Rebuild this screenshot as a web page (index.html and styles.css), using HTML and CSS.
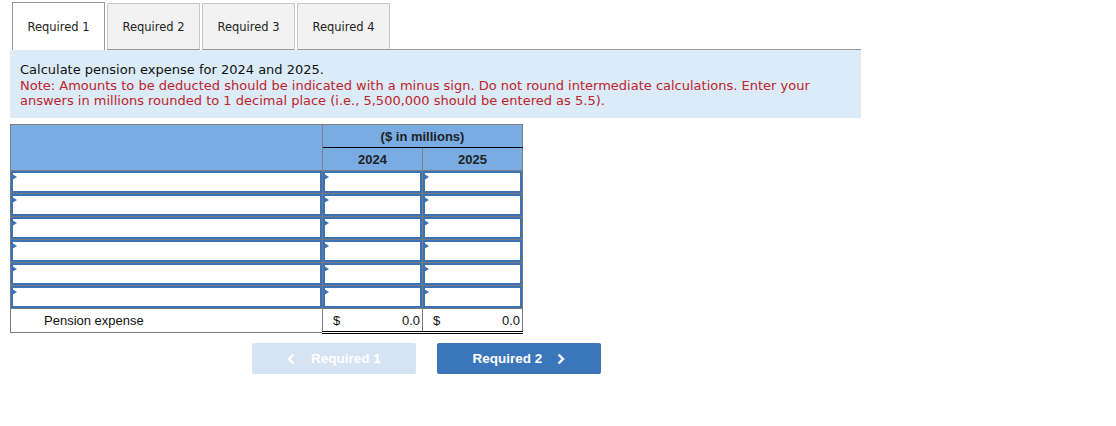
FILE: index.html
```html
<!DOCTYPE html>
<html>
<head>
<meta charset="utf-8">
<link rel="stylesheet" href="styles.css">
</head>
<body>
<div class="page">
  <div class="tabs">
    <div class="tab active">Required 1</div>
    <div class="tab">Required 2</div>
    <div class="tab">Required 3</div>
    <div class="tab">Required 4</div>
    <div class="tab-fill"></div>
  </div>
  <div class="info">
    <div class="q">Calculate pension expense for 2024 and 2025.</div>
    <div class="note">Note: Amounts to be deducted should be indicated with a minus sign. Do not round intermediate calculations. Enter your answers in millions rounded to 1 decimal place (i.e., 5,500,000 should be entered as 5.5).</div>
  </div>
  <table class="grid">
    <colgroup><col class="c1"><col class="c2"><col class="c3"></colgroup>
    <thead>
      <tr><th class="blank" rowspan="2"></th><th class="units" colspan="2">($ in millions)</th></tr>
      <tr><th class="yr">2024</th><th class="yr">2025</th></tr>
    </thead>
    <tbody>
      <tr class="entry"><td><div class="inp"></div></td><td><div class="inp"></div></td><td><div class="inp"></div></td></tr>
      <tr class="entry"><td><div class="inp"></div></td><td><div class="inp"></div></td><td><div class="inp"></div></td></tr>
      <tr class="entry"><td><div class="inp"></div></td><td><div class="inp"></div></td><td><div class="inp"></div></td></tr>
      <tr class="entry"><td><div class="inp"></div></td><td><div class="inp"></div></td><td><div class="inp"></div></td></tr>
      <tr class="entry"><td><div class="inp"></div></td><td><div class="inp"></div></td><td><div class="inp"></div></td></tr>
      <tr class="entry"><td><div class="inp"></div></td><td><div class="inp"></div></td><td><div class="inp"></div></td></tr>
      <tr class="total">
        <td class="label">Pension expense</td>
        <td class="num"><span class="cur">$</span><span class="val">0.0</span></td>
        <td class="num"><span class="cur">$</span><span class="val">0.0</span></td>
      </tr>
    </tbody>
  </table>
  <div class="nav">
    <button class="btn prev"><svg class="chev" width="8" height="12" viewBox="0 0 8 12"><path d="M6.5 1.5 L2 6 L6.5 10.5" fill="none" stroke="#fff" stroke-width="2.4"/></svg>Required 1</button>
    <button class="btn next">Required 2<svg class="chev" width="8" height="12" viewBox="0 0 8 12"><path d="M1.5 1.5 L6 6 L1.5 10.5" fill="none" stroke="#fff" stroke-width="2.4"/></svg></button>
  </div>
</div>
</body>
</html>
```

FILE: styles.css
```css
* { box-sizing: border-box; }
body { margin: 0; background: #fff; font-family: "DejaVu Sans", Verdana, sans-serif; }
.page { padding: 2px 0 0 10px; width: 861px; }

.tabs { display: flex; align-items: flex-end; height: 48px; gap: 2px; padding-left: 2px; }
.tab {
  width: 93px; height: 47px; display: flex; align-items: center; justify-content: center;
  font-size: 11.5px; color: #222; background: #f2f2f2; border: 1px solid #c8c8c8;
  border-bottom: 1px solid #999;
}
.tab.active { background: #fff; border-color: #999; border-bottom: none; height: 48px; }
.tab-fill { flex: 1; border-bottom: 1px solid #999; height: 1px; margin-left: -2px; }

.info { background: #dbebf8; padding: 12px 10px 8px 10px; height: 68px; font-size: 13px; line-height: 15.5px; }
.q { color: #111; }
.note { color: #c0242a; }

.grid { border-collapse: collapse; margin-top: 6px; table-layout: fixed; width: 512px; font-family: "Liberation Sans", Arial, sans-serif; font-size: 13px; }
.c1 { width: 312px; } .c2 { width: 100px; } .c3 { width: 100px; }
.grid th { background: #78ace2; color: #222; font-weight: bold; height: 23px; padding: 0; border: 1px solid #808080; font-size: 13px; }
.grid th.units { border-bottom: 1.5px solid #000; }
.grid td { padding: 0; height: 23px; border: 1px solid #7a7a7a; }
.entry td { background: #fff; }
.inp { height: 22px; border: 2px solid #3a72b8; position: relative; background: #fff; }
.inp::before { content: ""; position: absolute; left: -1px; top: 1px; border-left: 5px solid #3a72b8; border-top: 3px solid transparent; border-bottom: 3px solid transparent; }
.total td { height: 24px; color: #111; }
.total .label { padding-left: 33px; border-right: 1px solid #808080; }
.total .num { border-top: 1px solid #000; border-bottom: 3px double #000; padding: 0 2px 0 10px; }
.val { float: right; }
.cur { float: left; }

.nav { display: flex; gap: 21px; padding-left: 242px; margin-top: 9px; }
.btn { width: 164px; height: 31px; border: none; border-radius: 2px; font-family: "Liberation Sans", Arial, sans-serif; font-weight: bold; font-size: 13.5px; color: #fff; display: flex; align-items: center; justify-content: center; }
.btn.prev { background: #d6e3f2; }
.btn.next { background: #3b76bb; }
.chev { display: block; }
.prev .chev { margin-right: 16px; }
.next .chev { margin-left: 15px; }
```
